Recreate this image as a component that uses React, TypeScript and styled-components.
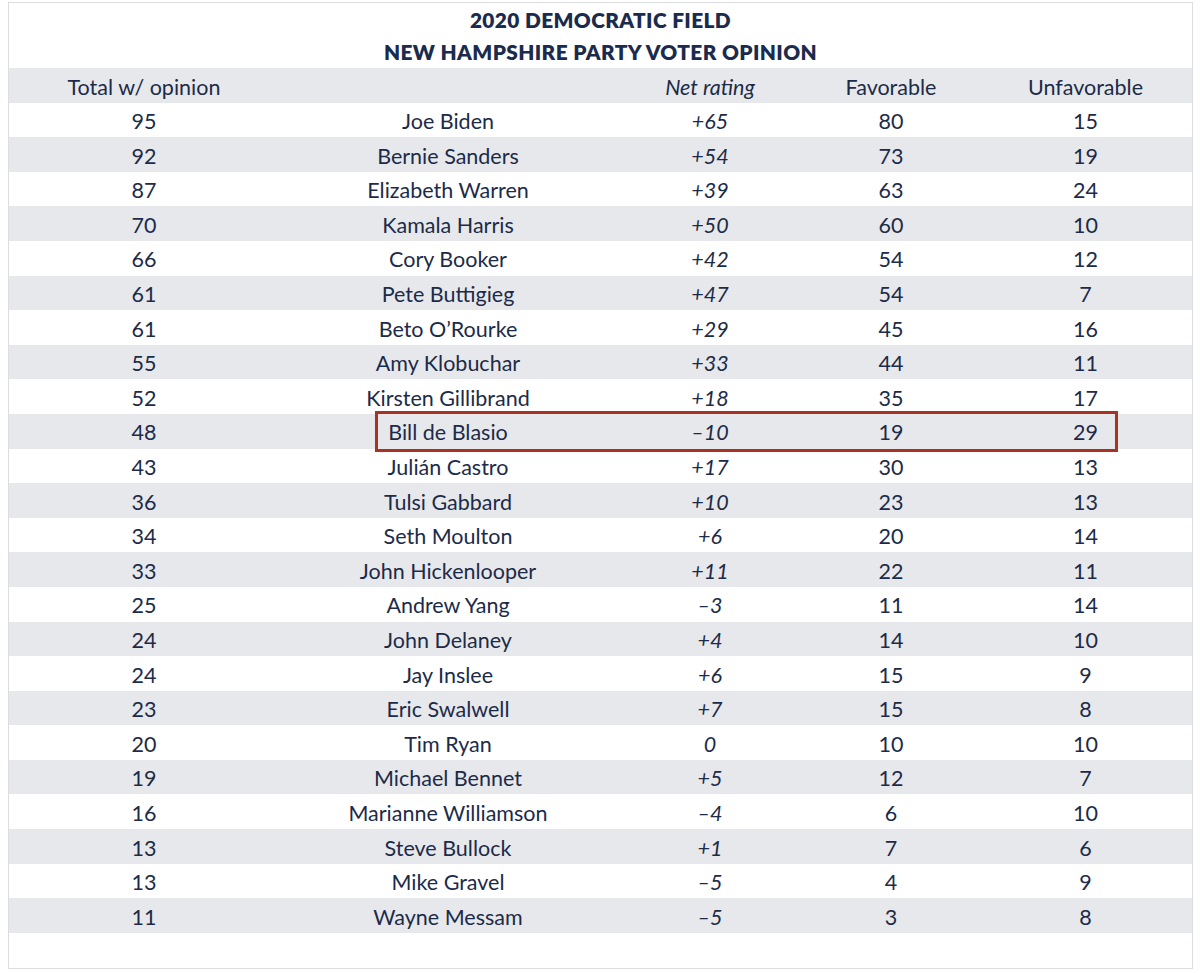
import React from 'react';
import styled, { createGlobalStyle } from 'styled-components';

interface rowType {
  name: string;
  total: number;
  net: string;
  fav: number;
  unfav: number;
  mark?: boolean;
}

interface stripeType {
  shade: boolean;
}

interface cellType {
  italic?: boolean;
}

const GlobalStyle = createGlobalStyle`
  body {
    margin: 0;
    background: #fff;
    font-family: Lato, 'Open Sans', sans-serif;
    color: #1c2b48;
  }
`;

const Frame = styled.div`
  margin: 2px 8px 0;
  width: 1185px;
  border: 1px solid #dcdde0;
  box-sizing: border-box;
  padding-bottom: 35px;
`;

const Title = styled.div`
  padding-top: 1px;
  text-align: center;
  font-weight: 800;
  font-size: 20.8px;
  letter-spacing: 0.4px;
  line-height: 32px;
  color: #1b2b4d;
`;

const Table = styled.div`
  display: flex;
  flex-direction: column;
`;

const Row = styled.div<stripeType>`
  position: relative;
  display: grid;
  grid-template-columns: 270px 338px 186px 176px 213px;
  height: 34.6px;
  align-items: center;
  background: ${(props) => (props.shade ? '#e7e8eb' : '#fff')};
`;

const Cell = styled.div<cellType>`
  text-align: center;
  font-size: 21.5px;
  font-style: ${(props) => (props.italic ? 'italic' : 'normal')};
  line-height: 34px;
  padding-top: 1.5px;
  white-space: nowrap;
`;

const Highlight = styled.div`
  position: absolute;
  z-index: 1;
  left: 366px;
  width: 743px;
  top: -3px;
  bottom: -3px;
  border: 3.5px solid #a83322;
  box-sizing: border-box;
  pointer-events: none;
`;

const rows: rowType[] = [
  { total: 95, name: 'Joe Biden', net: '+65', fav: 80, unfav: 15 },
  { total: 92, name: 'Bernie Sanders', net: '+54', fav: 73, unfav: 19 },
  { total: 87, name: 'Elizabeth Warren', net: '+39', fav: 63, unfav: 24 },
  { total: 70, name: 'Kamala Harris', net: '+50', fav: 60, unfav: 10 },
  { total: 66, name: 'Cory Booker', net: '+42', fav: 54, unfav: 12 },
  { total: 61, name: 'Pete Buttigieg', net: '+47', fav: 54, unfav: 7 },
  { total: 61, name: 'Beto O’Rourke', net: '+29', fav: 45, unfav: 16 },
  { total: 55, name: 'Amy Klobuchar', net: '+33', fav: 44, unfav: 11 },
  { total: 52, name: 'Kirsten Gillibrand', net: '+18', fav: 35, unfav: 17 },
  { total: 48, name: 'Bill de Blasio', net: '–10', fav: 19, unfav: 29, mark: true },
  { total: 43, name: 'Julián Castro', net: '+17', fav: 30, unfav: 13 },
  { total: 36, name: 'Tulsi Gabbard', net: '+10', fav: 23, unfav: 13 },
  { total: 34, name: 'Seth Moulton', net: '+6', fav: 20, unfav: 14 },
  { total: 33, name: 'John Hickenlooper', net: '+11', fav: 22, unfav: 11 },
  { total: 25, name: 'Andrew Yang', net: '–3', fav: 11, unfav: 14 },
  { total: 24, name: 'John Delaney', net: '+4', fav: 14, unfav: 10 },
  { total: 24, name: 'Jay Inslee', net: '+6', fav: 15, unfav: 9 },
  { total: 23, name: 'Eric Swalwell', net: '+7', fav: 15, unfav: 8 },
  { total: 20, name: 'Tim Ryan', net: '0', fav: 10, unfav: 10 },
  { total: 19, name: 'Michael Bennet', net: '+5', fav: 12, unfav: 7 },
  { total: 16, name: 'Marianne Williamson', net: '–4', fav: 6, unfav: 10 },
  { total: 13, name: 'Steve Bullock', net: '+1', fav: 7, unfav: 6 },
  { total: 13, name: 'Mike Gravel', net: '–5', fav: 4, unfav: 9 },
  { total: 11, name: 'Wayne Messam', net: '–5', fav: 3, unfav: 8 },
];

function App() {
  return (
    <>
      <GlobalStyle />
      <Frame>
        <Title>
          <div>2020 DEMOCRATIC FIELD</div>
          <div>NEW HAMPSHIRE PARTY VOTER OPINION</div>
        </Title>
        <Table>
          <Row shade={true}>
            <Cell>Total w/ opinion</Cell>
            <Cell></Cell>
            <Cell italic>Net rating</Cell>
            <Cell>Favorable</Cell>
            <Cell>Unfavorable</Cell>
          </Row>
          {rows.map((r, i) => (
            <Row key={r.name} shade={i % 2 === 1}>
              <Cell>{r.total}</Cell>
              <Cell>{r.name}</Cell>
              <Cell italic>{r.net}</Cell>
              <Cell>{r.fav}</Cell>
              <Cell>{r.unfav}</Cell>
              {r.mark && <Highlight />}
            </Row>
          ))}
        </Table>
      </Frame>
    </>
  );
}

export default App;
